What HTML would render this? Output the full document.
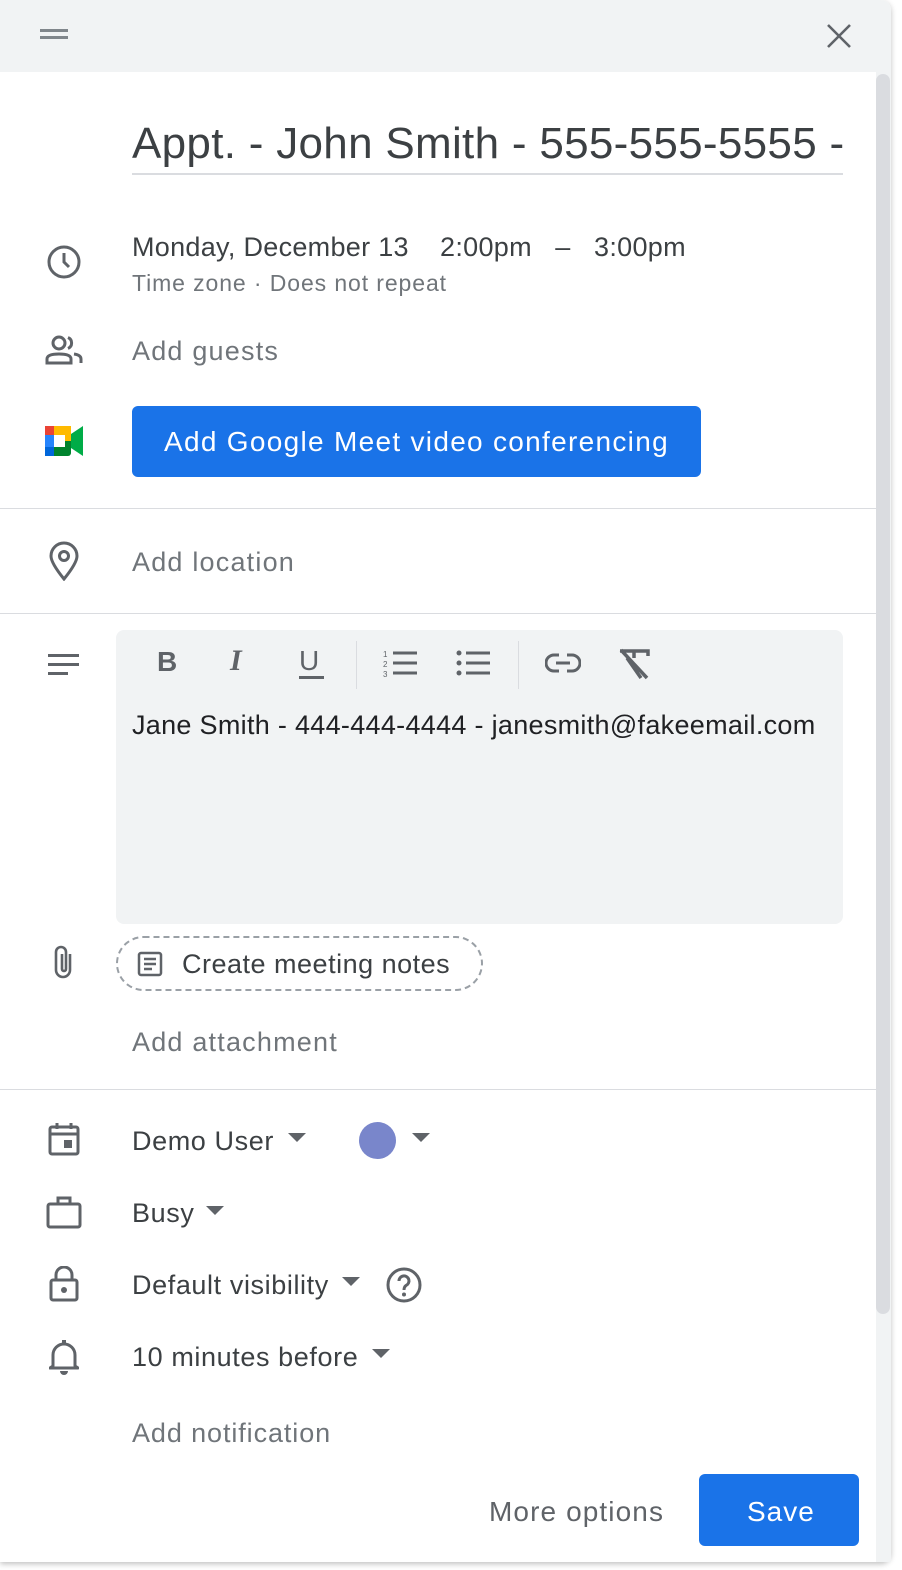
<!DOCTYPE html>
<html><head><meta charset="utf-8"><style>
*{margin:0;padding:0;box-sizing:border-box}
body{width:902px;height:1570px;background:#fff;font-family:"Liberation Sans",Arial,sans-serif;color:#3c4043;position:relative;overflow:hidden}
.dlg{position:absolute;left:0;top:0;width:891px;height:1562px;background:#fff;border-radius:0 10px 10px 0;box-shadow:0 2px 6px rgba(0,0,0,.25)}
.hdr{position:absolute;left:0;top:0;width:891px;height:72px;background:#f1f3f4;border-radius:0 10px 0 0}
.a{position:absolute}
.t{position:absolute;white-space:nowrap;letter-spacing:.6px}
.hr{position:absolute;left:0;width:876px;height:1px;background:#dadce0}
svg{position:absolute}
</style></head><body>
<div class="dlg">
<div class="hdr"></div>
<div class="a" style="left:40px;top:29px;width:28px;height:3px;background:#80868b"></div>
<div class="a" style="left:40px;top:36px;width:28px;height:3px;background:#80868b"></div>
<svg style="left:827px;top:24px" width="24" height="24" viewBox="0 0 24 24"><path d="M1 1L23 23M23 1L1 23" stroke="#5f6368" stroke-width="2.6"/></svg>
<div class="a" style="left:876px;top:72px;width:15px;height:1490px;background:#f1f3f4"></div>
<div class="a" style="left:876px;top:74px;width:14px;height:1240px;background:#dadce0;border-radius:7px"></div>

<div class="t" style="left:132px;top:119px;font-size:44px;color:#3c4043;width:712px;overflow:hidden;letter-spacing:.3px">Appt. - John Smith - 555-555-5555 - x</div>
<div class="a" style="left:132px;top:173px;width:711px;height:2px;background:#dadce0"></div>

<svg style="left:46px;top:244px" width="36" height="36" viewBox="0 0 36 36"><circle cx="18" cy="18" r="15" fill="none" stroke="#5f6368" stroke-width="3"/><path d="M18 9V18L23 23" fill="none" stroke="#5f6368" stroke-width="3"/></svg>
<div class="t" style="left:132px;top:232px;font-size:27px;letter-spacing:.3px">Monday, December 13&nbsp;&nbsp;&nbsp;&nbsp;2:00pm&nbsp;&nbsp;&nbsp;–&nbsp;&nbsp;&nbsp;3:00pm</div>
<div class="t" style="left:132px;top:270px;font-size:23px;color:#70757a;letter-spacing:.9px">Time zone · Does not repeat</div>

<svg style="left:44px;top:334px" width="40" height="32" viewBox="0 0 40 32"><circle cx="15" cy="9" r="6" fill="none" stroke="#5f6368" stroke-width="3"/><path d="M3 29V25Q3 20 15 20Q27 20 27 25V29Z" fill="none" stroke="#5f6368" stroke-width="3"/><path d="M24 3.5A6 6 0 0 1 24 14.5M30 20Q37 21 37 25V29" fill="none" stroke="#5f6368" stroke-width="3"/></svg>
<div class="t" style="left:132px;top:336px;font-size:27px;color:#70757a;letter-spacing:1.2px">Add guests</div>

<svg style="left:45px;top:426px" width="38" height="30" viewBox="0 0 38 30"><rect x="0" y="0" width="26" height="30" rx="3" fill="#00832d"/><rect x="0" y="0" width="26" height="15" fill="#ffba00"/><rect x="0" y="0" width="9" height="30" fill="#2684fc"/><rect x="0" y="0" width="9" height="9" fill="#ea4335"/><rect x="0" y="21" width="9" height="9" fill="#0066da"/><path d="M26 8L38 0V30L26 22Z" fill="#00ac47"/><rect x="9" y="9" width="11" height="12" fill="#fff"/></svg>
<div class="a" style="left:132px;top:406px;width:569px;height:71px;background:#1a73e8;border-radius:6px"></div>
<div class="t" style="left:164px;top:426px;font-size:28px;color:#fff;letter-spacing:1.3px">Add Google Meet video conferencing</div>

<div class="hr" style="top:508px"></div>
<svg style="left:48px;top:541px" width="32" height="40" viewBox="0 0 32 40"><path d="M16 38Q3 22 3 15A13 13 0 0 1 29 15Q29 22 16 38Z" fill="none" stroke="#5f6368" stroke-width="3"/><circle cx="16" cy="15" r="4.5" fill="none" stroke="#5f6368" stroke-width="3"/></svg>
<div class="t" style="left:132px;top:547px;font-size:27px;color:#70757a;letter-spacing:1.2px">Add location</div>
<div class="hr" style="top:613px"></div>

<div class="a" style="left:48px;top:654px;width:31px;height:3px;background:#5f6368"></div>
<div class="a" style="left:48px;top:663px;width:31px;height:3px;background:#5f6368"></div>
<div class="a" style="left:48px;top:672px;width:20px;height:3px;background:#5f6368"></div>

<div class="a" style="left:116px;top:630px;width:727px;height:294px;background:#f1f3f4;border-radius:8px"></div>
<div class="t" style="left:157px;top:646px;font-size:28px;font-weight:bold;color:#5f6368">B</div>
<div class="t" style="left:230px;top:644px;font-size:30px;font-weight:bold;font-style:italic;color:#5f6368;font-family:'Liberation Serif',serif">I</div>
<div class="t" style="left:299px;top:645px;font-size:28px;color:#5f6368">U</div>
<div class="a" style="left:299px;top:676px;width:25px;height:3px;background:#5f6368"></div>
<div class="a" style="left:356px;top:641px;width:1px;height:48px;background:#dadce0"></div>
<svg style="left:383px;top:648px" width="36" height="30" viewBox="0 0 36 30"><text x="0" y="9" font-size="8" fill="#5f6368" font-family="Liberation Sans">1</text><text x="0" y="19" font-size="8" fill="#5f6368" font-family="Liberation Sans">2</text><text x="0" y="29" font-size="8" fill="#5f6368" font-family="Liberation Sans">3</text><path d="M10 5H34M10 15H34M10 25H34" stroke="#5f6368" stroke-width="3"/></svg>
<svg style="left:456px;top:648px" width="36" height="30" viewBox="0 0 36 30"><circle cx="3" cy="5" r="2.5" fill="#5f6368"/><circle cx="3" cy="15" r="2.5" fill="#5f6368"/><circle cx="3" cy="25" r="2.5" fill="#5f6368"/><path d="M10 5H34M10 15H34M10 25H34" stroke="#5f6368" stroke-width="3"/></svg>
<div class="a" style="left:518px;top:641px;width:1px;height:48px;background:#dadce0"></div>
<svg style="left:545px;top:651px" width="36" height="24" viewBox="0 0 36 24"><path d="M14 4H9A8 8 0 0 0 9 20H14M22 4H27A8 8 0 0 1 27 20H22M11 12H25" fill="none" stroke="#5f6368" stroke-width="3"/></svg>
<svg style="left:617px;top:648px" width="34" height="32" viewBox="0 0 34 32"><path d="M3 3H31V8M17 3V10M10 10L24 30M4 2L30 30" fill="none" stroke="#5f6368" stroke-width="3.5"/></svg>
<div class="t" style="left:132px;top:710px;font-size:27px;color:#202124;letter-spacing:.3px">Jane Smith - 444-444-4444 - janesmith@fakeemail.com</div>

<svg style="left:50px;top:944px" width="28" height="36" viewBox="0 0 28 36"><path d="M20 10V26A7 7 0 0 1 6 26V8A5 5 0 0 1 16 8V25A2 2 0 0 1 12 25V10" fill="none" stroke="#5f6368" stroke-width="2.6"/></svg>
<div class="a" style="left:116px;top:936px;width:367px;height:55px;border:2px dashed #9aa0a6;border-radius:28px"></div>
<svg style="left:137px;top:951px" width="26" height="26" viewBox="0 0 26 26"><rect x="2" y="2" width="22" height="22" rx="2" fill="none" stroke="#5f6368" stroke-width="2.5"/><path d="M7 8H19M7 13H19M7 18H15" stroke="#5f6368" stroke-width="2.5"/></svg>
<div class="t" style="left:182px;top:949px;font-size:27px;color:#3c4043;letter-spacing:.5px">Create meeting notes</div>
<div class="t" style="left:132px;top:1027px;font-size:27px;color:#70757a;letter-spacing:1.2px">Add attachment</div>
<div class="hr" style="top:1089px"></div>

<svg style="left:47px;top:1122px" width="34" height="34" viewBox="0 0 34 34"><rect x="3" y="5" width="28" height="27" rx="2" fill="none" stroke="#5f6368" stroke-width="3"/><path d="M3 12H31M10 1V7M24 1V7" stroke="#5f6368" stroke-width="3"/><rect x="17" y="18" width="8" height="8" fill="#5f6368"/></svg>
<div class="t" style="left:132px;top:1126px;font-size:27px">Demo User</div>
<svg style="left:288px;top:1133px" width="18" height="10"><path d="M0 0H18L9 9Z" fill="#5f6368"/></svg>
<div class="a" style="left:359px;top:1122px;width:37px;height:37px;border-radius:50%;background:#7986cb"></div>
<svg style="left:412px;top:1133px" width="18" height="10"><path d="M0 0H18L9 9Z" fill="#5f6368"/></svg>

<svg style="left:46px;top:1195px" width="36" height="34" viewBox="0 0 36 34"><rect x="2" y="9" width="32" height="23" rx="2" fill="none" stroke="#5f6368" stroke-width="3"/><path d="M12 9V3H24V9" fill="none" stroke="#5f6368" stroke-width="3"/></svg>
<div class="t" style="left:132px;top:1198px;font-size:27px">Busy</div>
<svg style="left:206px;top:1206px" width="18" height="10"><path d="M0 0H18L9 9Z" fill="#5f6368"/></svg>

<svg style="left:49px;top:1266px" width="30" height="36" viewBox="0 0 30 36"><rect x="2" y="14" width="26" height="20" rx="2" fill="none" stroke="#5f6368" stroke-width="3"/><path d="M7 14V9A8 8 0 0 1 23 9V14" fill="none" stroke="#5f6368" stroke-width="3"/><circle cx="15" cy="24" r="3" fill="#5f6368"/></svg>
<div class="t" style="left:132px;top:1270px;font-size:27px">Default visibility</div>
<svg style="left:342px;top:1277px" width="18" height="10"><path d="M0 0H18L9 9Z" fill="#5f6368"/></svg>
<svg style="left:385px;top:1266px" width="38" height="38" viewBox="0 0 38 38"><circle cx="19" cy="19" r="16" fill="none" stroke="#5f6368" stroke-width="3"/><path d="M14 15A5 5 0 1 1 21 19.5Q19 21 19 24" fill="none" stroke="#5f6368" stroke-width="3"/><circle cx="19" cy="28.5" r="2" fill="#5f6368"/></svg>

<svg style="left:49px;top:1339px" width="30" height="36" viewBox="0 0 30 36"><path d="M4 27V16A11 11 0 0 1 26 16V27L29 29H1Z" fill="none" stroke="#5f6368" stroke-width="3" stroke-linejoin="round"/><path d="M11 32A4 4 0 0 0 19 32" fill="#5f6368"/><rect x="13" y="1" width="4" height="5" fill="#5f6368"/></svg>
<div class="t" style="left:132px;top:1342px;font-size:27px">10 minutes before</div>
<svg style="left:372px;top:1349px" width="18" height="10"><path d="M0 0H18L9 9Z" fill="#5f6368"/></svg>
<div class="t" style="left:132px;top:1418px;font-size:27px;color:#70757a;letter-spacing:.9px">Add notification</div>

<div class="t" style="left:489px;top:1496px;font-size:28px;color:#5f6368;letter-spacing:1.1px">More options</div>
<div class="a" style="left:699px;top:1474px;width:160px;height:72px;background:#1a73e8;border-radius:6px"></div>
<div class="t" style="left:747px;top:1496px;font-size:28px;color:#fff;letter-spacing:1px">Save</div>
</div>
</body></html>
